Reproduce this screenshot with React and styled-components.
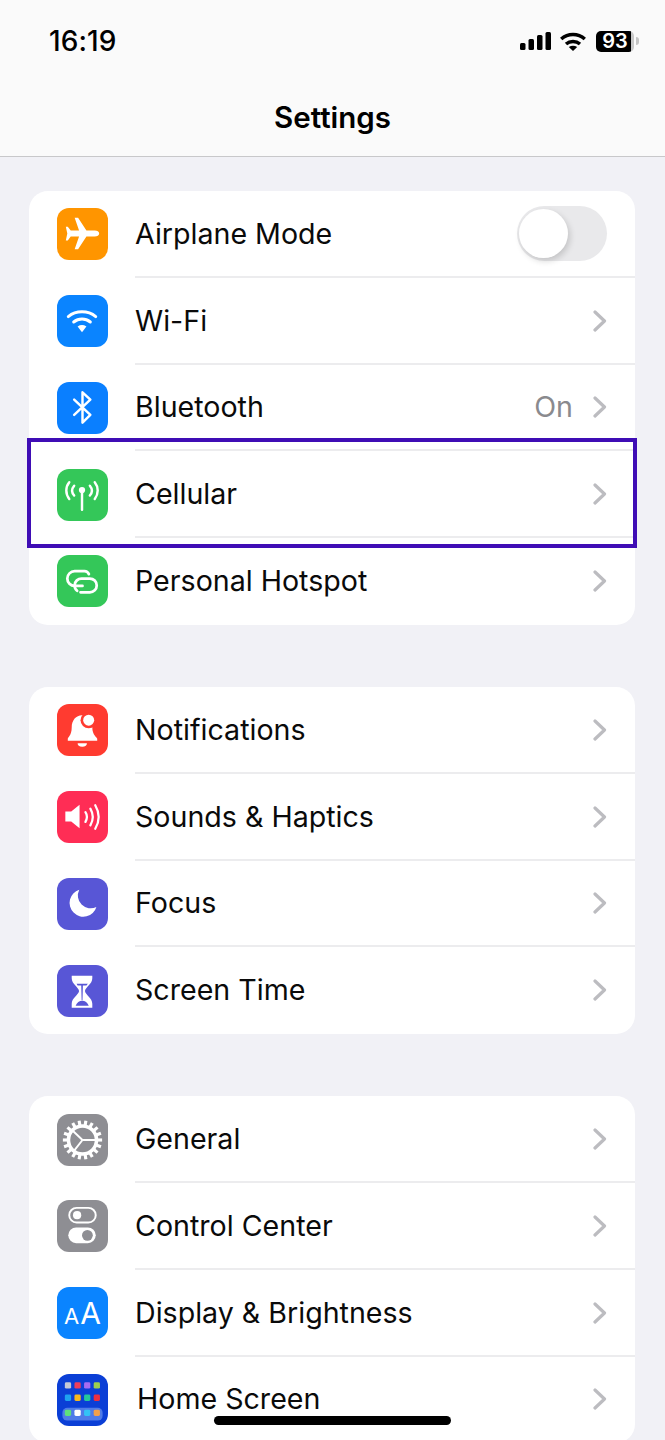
import React from 'react';
import styled, { createGlobalStyle } from 'styled-components';

const GlobalStyle = createGlobalStyle`
  html, body {
    margin: 0;
    padding: 0;
    background: #f1f1f6;
  }
  body {
    font-family: Inter, "Liberation Sans", sans-serif;
    color: #0a0a0a;
  }
`;

const Chevron = () => (
  <ChevronIcon viewBox="0 0 14 22" fill="none">
    <path d="M2 2l9.5 9L2 20" stroke="currentColor" strokeWidth="3.2" strokeLinecap="round" strokeLinejoin="round" />
  </ChevronIcon>
);

const Glyph = ({ children }) => (
  <svg width="52" height="52" viewBox="0 0 52 52" fill="none">{children}</svg>
);

const AirplaneGlyph = () => (
  <Glyph>
    <path fill="#fff" d="M43 25.5c0-1.8-2-3-4.5-3H30L21.5 9.5H18l4.5 13H14l-3-4H9l1.5 7L9 32.5h2l3-4h8.5l-4.5 13h3.5L30 28.5h8.5c2.5 0 4.5-1.2 4.5-3z" />
  </Glyph>
);

const WifiGlyph = () => (
  <Glyph>
    <path stroke="#fff" strokeWidth="3" strokeLinecap="round" d="M11.5 21.5c8-6.5 20-6.5 28 0M17 27c5-4 12-4 17 0" />
    <path fill="#fff" d="M21 31.5c3-1.8 6-1.8 9 0l-4.5 6z" />
  </Glyph>
);

const BluetoothGlyph = () => (
  <Glyph>
    <path stroke="#fff" strokeWidth="2.5" strokeLinejoin="round" strokeLinecap="round" d="M17.5 17.5L34 33l-8 8V10l8 7.5L17.5 33" />
  </Glyph>
);

const CellularGlyph = () => (
  <Glyph>
    <circle cx="25.5" cy="21" r="3.2" fill="#fff" />
    <path stroke="#fff" strokeWidth="2.5" strokeLinecap="round" d="M25.5 22v19" />
    <path stroke="#fff" strokeWidth="2.5" strokeLinecap="round" d="M12.5 13c-4 5-4 12 0 17M38.5 13c4 5 4 12 0 17M17.5 16.5c-2.5 3-2.5 7 0 10M33.5 16.5c2.5 3 2.5 7 0 10" />
  </Glyph>
);

const HotspotGlyph = () => (
  <Glyph>
    <path stroke="#fff" strokeWidth="2.8" strokeLinecap="round" d="M26 31h-8a7.5 7.5 0 0 1 0-15h10a5 5 0 0 1 4.5 3" />
    <path stroke="#fff" strokeWidth="2.8" strokeLinecap="round" d="M20.5 36a7 7 0 0 1-2.5-5.5 7 7 0 0 1 7.5-7H33.5a7 7 0 0 1 0 14H24" />
  </Glyph>
);

const BellGlyph = () => (
  <Glyph>
    <path fill="#fff" d="M11 35c0-1.5 4-3.5 4-11.5 0-7.5 4.5-12.5 10.5-12.5s10.500 5 10.500 12.500c0 8 5 10 5 11.500v2H11z" />
    <path fill="#fff" d="M21 39.5h9.5a4.75 3.5 0 0 1-9.5 0z" />
    <circle cx="32.3" cy="16" r="8.3" fill="#ff3b30" />
    <circle cx="32.3" cy="16" r="5.6" fill="#fff" />
  </Glyph>
);

const SoundGlyph = () => (
  <Glyph>
    <path fill="#fff" d="M8.5 20.5h6L23 13.5v24l-8.5-7h-6z" />
    <path stroke="#fff" strokeWidth="2.3" strokeLinecap="round" d="M29 21q3 4.5 0 10M34 17.5q5 8.5 0 17M39 14q7 12 0 24" />
  </Glyph>
);

const MoonGlyph = () => (
  <Glyph>
    <path fill="#fff" d="M22.7 11.5a14 14 0 1 0 17.5 17.5 13 13 0 0 1-17.5-17.5z" />
  </Glyph>
);

const HourglassGlyph = () => (
  <Glyph>
    <path fill="#fff" d="M15 10.5h21V13c0 6-7 9-7.5 13 .5 4 7.5 7 7.5 13v4H15v-4c0-6 7-9 7.5-13C22 22 15 19 15 13z" />
    <path fill="#5856d6" d="M20 18.5h11.500l-1.500 2h-3.600l-.4 15h-.9l-.4-15h-3.700zM19 41c1-3 4-5 6.700-5s5.700 2 6.700 5z" />
  </Glyph>
);

const GearGlyph = () => (
  <Glyph>
    {Array.from({ length: 18 }).map((_, i) => {
      const a = (i / 18) * Math.PI * 2;
      return (
        <line
          key={i}
          x1={26 + Math.cos(a) * 14}
          y1={26 + Math.sin(a) * 14}
          x2={26 + Math.cos(a) * 20}
          y2={26 + Math.sin(a) * 20}
          stroke="#fff"
          strokeWidth="3.2"
        />
      );
    })}
    <circle cx="26" cy="26" r="14.3" stroke="#fff" strokeWidth="3.6" />
    <path stroke="#fff" strokeWidth="2" d="M26 26H40M26 26L15 15.5M26 26L16.5 38" />
  </Glyph>
);

const ControlGlyph = () => (
  <Glyph>
    <rect x="12.5" y="7.5" width="27" height="15" rx="7.5" stroke="#fff" strokeWidth="2" />
    <circle cx="20.5" cy="15" r="4.2" fill="#fff" />
    <rect x="11.5" y="27.5" width="28" height="16" rx="8" fill="#fff" />
    <circle cx="31" cy="35.5" r="5.5" fill="#8e8e93" />
  </Glyph>
);

const DisplayGlyph = () => (
  <DisplayMark><SmallA>A</SmallA>A</DisplayMark>
);

const homeRows = [
  { y: 8, colors: ['#c5c9d6', '#ef3f5b', '#a66cf0', '#9ccf4f'] },
  { y: 20.5, colors: ['#1ea3f0', '#f7b81d', '#25c79a', '#ec2f3f'] },
  { y: 36, colors: ['#5ee07c', '#ffffff', '#33c3f5', '#f3a04a'] },
];

const HomeGlyph = () => (
  <Glyph>
    <rect x="5.5" y="34" width="41" height="13" rx="5" fill="#4f7be8" />
    {homeRows.map((row) =>
      row.colors.map((c, i) => (
        <rect key={`${row.y}-${i}`} x={8 + i * 9.8} y={row.y} width="6.4" height="6.4" rx="1.5" fill={c} />
      ))
    )}
  </Glyph>
);

const groups = [
  [
    { label: 'Airplane Mode', bg: '#ff9500', Icon: AirplaneGlyph, toggle: true },
    { label: 'Wi-Fi', bg: '#0a84ff', Icon: WifiGlyph },
    { label: 'Bluetooth', bg: '#0a7fff', Icon: BluetoothGlyph, value: 'On' },
    { label: 'Cellular', bg: '#34c759', Icon: CellularGlyph, highlight: true },
    { label: 'Personal Hotspot', bg: '#34c759', Icon: HotspotGlyph },
  ],
  [
    { label: 'Notifications', bg: '#ff3b30', Icon: BellGlyph },
    { label: 'Sounds & Haptics', bg: '#ff2d55', Icon: SoundGlyph },
    { label: 'Focus', bg: '#5856d6', Icon: MoonGlyph },
    { label: 'Screen Time', bg: '#5856d6', Icon: HourglassGlyph },
  ],
  [
    { label: 'General', bg: '#8e8e93', Icon: GearGlyph },
    { label: 'Control Center', bg: '#8e8e93', Icon: ControlGlyph },
    { label: 'Display & Brightness', bg: '#0a84ff', Icon: DisplayGlyph },
    { label: 'Home Screen', bg: '#0b3fd6', Icon: HomeGlyph, nudge: true },
  ],
];

export default function App() {
  return (
    <Page>
      <GlobalStyle />
      <Header>
        <StatusBar>
          <Time>16:19</Time>
          <StatusIcons>
            <svg width="31" height="18" viewBox="0 0 31 18" fill="#000">
              <rect x="0" y="11" width="5.5" height="7" rx="1.5" />
              <rect x="8.5" y="7" width="5.5" height="11" rx="1.5" />
              <rect x="17" y="3" width="5.5" height="15" rx="1.5" />
              <rect x="25.5" y="0" width="5.5" height="18" rx="1.5" />
            </svg>
            <svg width="26" height="19" viewBox="0 0 26 19" fill="none">
              <path stroke="#000" strokeWidth="3.5" d="M1.2 7c6.800-6 16.800-6 23.600 0M6 12c4-3.500 10-3.500 14 0" />
              <path fill="#000" d="M8.8 15c2.700-1.800 5.700-1.800 8.400 0L13 19z" />
            </svg>
            <Battery>
              <BatteryLevel>93</BatteryLevel>
              <BatteryNub />
            </Battery>
          </StatusIcons>
        </StatusBar>
        <Title>Settings</Title>
      </Header>
      <Groups>
        {groups.map((rows, g) => (
          <Group key={g}>
            {rows.map(({ Icon, ...row }, i) => (
              <Row key={row.label}>
                <IconTile $bg={row.bg}><Icon /></IconTile>
                <RowBody $last={i === rows.length - 1}>
                  <Label $nudge={row.nudge}>{row.label}</Label>
                  {row.toggle ? (
                    <Toggle><Knob /></Toggle>
                  ) : (
                    <Accessory>
                      {row.value && <Value>{row.value}</Value>}
                      <Chevron />
                    </Accessory>
                  )}
                </RowBody>
                {row.highlight && <Highlight />}
              </Row>
            ))}
          </Group>
        ))}
      </Groups>
      <HomeIndicator />
    </Page>
  );
}

const Page = styled.div`
  position: relative;
  width: 665px;
  height: 1440px;
  overflow: hidden;
  background: #f1f1f6;
`;

const Header = styled.header`
  height: 156px;
  background: #fafafa;
  border-bottom: 1px solid #c8c8ca;
  display: flex;
  flex-direction: column;
`;

const StatusBar = styled.div`
  display: flex;
  align-items: center;
  justify-content: space-between;
  padding: 25px 26px 0 49px;
  height: 32px;
`;

const Time = styled.span`
  font-size: 28px;
  font-weight: 500;
  line-height: 32px;
  letter-spacing: 0.1px;
  color: #000;
`;

const StatusIcons = styled.div`
  display: flex;
  align-items: center;
  gap: 9px;
`;

const Battery = styled.div`
  display: flex;
  align-items: center;
  gap: 2px;
  margin-left: 1px;
`;

const BatteryLevel = styled.div`
  width: 38px;
  height: 21px;
  border-radius: 5px;
  background: linear-gradient(90deg, #000 92%, #c9c9c9 92%);
  color: #fff;
  font-size: 20px;
  font-weight: 600;
  line-height: 21px;
  text-align: center;
`;

const BatteryNub = styled.div`
  width: 3px;
  height: 8px;
  border-radius: 0 3px 3px 0;
  background: #c4c4c4;
`;

const Title = styled.h1`
  margin: 0;
  padding-top: 43px;
  font-size: 29.5px;
  font-weight: 600;
  line-height: 34px;
  text-align: center;
  color: #000;
`;

const Groups = styled.main`
  display: flex;
  flex-direction: column;
  gap: 62.25px;
  padding: 34px 30px 0 29px;
`;

const Group = styled.section`
  background: #fff;
  border-radius: 19px;
`;

const Row = styled.div`
  position: relative;
  display: flex;
  height: 86.75px;
  padding-left: 28px;
`;

const IconTile = styled.div`
  align-self: center;
  flex: none;
  width: 51px;
  height: 52px;
  margin-right: 27px;
  border-radius: 12px;
  background: ${({ $bg }) => $bg};
  display: flex;
  align-items: center;
  justify-content: center;
`;

const RowBody = styled.div`
  flex: 1;
  min-width: 0;
  display: flex;
  align-items: center;
  justify-content: space-between;
  padding-right: 28px;
  padding-bottom: 1px;
  box-sizing: border-box;
  box-shadow: ${({ $last }) => ($last ? 'none' : 'inset 0 -2px 0 #ececee')};
`;

const Label = styled.span`
  font-size: 28.6px;
  line-height: 36px;
  font-weight: 400;
  color: #0a0a0a;
  margin-left: ${({ $nudge }) => ($nudge ? '2px' : '0')};
`;

const Accessory = styled.div`
  display: flex;
  align-items: center;
  gap: 20px;
`;

const Value = styled.span`
  font-size: 28.6px;
  line-height: 36px;
  color: #8a8a8e;
`;

const ChevronIcon = styled.svg`
  width: 14px;
  height: 22px;
  color: #bcbcc0;
`;

const Toggle = styled.div`
  width: 90px;
  height: 55px;
  border-radius: 28px;
  background: #e9e9eb;
  display: flex;
  align-items: center;
  padding-left: 2px;
  box-sizing: border-box;
`;

const Knob = styled.div`
  width: 49px;
  height: 49px;
  border-radius: 50%;
  background: #fff;
  box-shadow: 2px 3px 6px rgba(0, 0, 0, 0.16);
`;

const DisplayMark = styled.span`
  color: #fff;
  font-size: 30px;
  font-weight: 400;
  line-height: 1;
  display: flex;
  align-items: baseline;
  gap: 1px;
`;

const SmallA = styled.span`
  font-size: 22px;
`;

const Highlight = styled.div`
  position: absolute;
  top: -13px;
  bottom: -10px;
  left: -2px;
  right: -2px;
  border: 4px solid #3f0db5;
  pointer-events: none;
`;

const HomeIndicator = styled.div`
  position: absolute;
  left: 214px;
  top: 1416px;
  width: 237px;
  height: 9px;
  border-radius: 5px;
  background: #000;
`;
